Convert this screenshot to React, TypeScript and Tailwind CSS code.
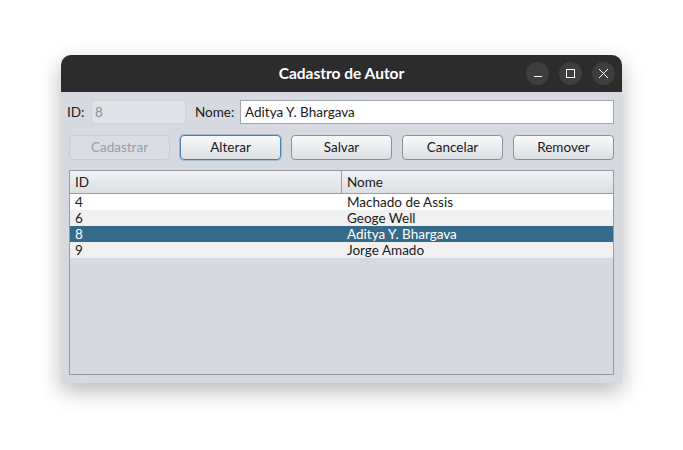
import { X } from 'lucide-react';

const rows = [
  { id: '4', nome: 'Machado de Assis' },
  { id: '6', nome: 'Geoge Well' },
  { id: '8', nome: 'Aditya Y. Bhargava' },
  { id: '9', nome: 'Jorge Amado' },
];

const btn =
  'h-[25px] w-[101px] rounded-[4px] border text-[13.5px] bg-gradient-to-b from-[#f8f9fa] to-[#dcdfe4] border-[#8d9097] text-[#1a1a1a]';

function TitleButton({ children }: { children: React.ReactNode }) {
  return (
    <div className="flex h-[23px] w-[23px] items-center justify-center rounded-full bg-[#3e3e3e] text-white">
      {children}
    </div>
  );
}

export default function App() {
  return (
    <div
      className="h-[450px] w-[683px] bg-white pt-[55px] pl-[61px]"
      style={{ fontFamily: 'Lato, "Noto Sans", sans-serif' }}
    >
      <div className="w-[561px] h-[328px] rounded-t-[10px] overflow-hidden bg-[#d6d9e0] shadow-[0_8px_22px_rgba(0,0,0,0.28)] flex flex-col">
        {/* title bar */}
        <div className="relative h-[37px] bg-[#2c2c2c] flex items-center justify-center">
          <span className="text-[15.5px] font-bold text-white">Cadastro de Autor</span>
          <div className="absolute right-[7px] top-[7px] flex gap-[10px]">
            <TitleButton>
              <div className="mt-[6px] h-[1.5px] w-[8px] bg-white" />
            </TitleButton>
            <TitleButton>
              <div className="h-[9px] w-[9px] border-[1.5px] border-white" />
            </TitleButton>
            <TitleButton>
              <X className="h-[17px] w-[17px] shrink-0" strokeWidth={1.4} />
            </TitleButton>
          </div>
        </div>

        <div className="flex flex-col px-[8px] pt-[8px]">
          {/* fields */}
          <div className="flex items-center h-[24px] text-[13.5px] text-[#1a1a1a]">
            <span className="ml-[-2px] w-[24px]">ID:</span>
            <div className="h-[24px] w-[95px] border border-[#cfd2d8] bg-[#dfe2e7] pl-[3px] flex items-center text-[#8d9096]">
              8
            </div>
            <span className="ml-[9px] w-[45px]">Nome:</span>
            <div className="h-[24px] flex-1 border border-[#a3a6ac] bg-white pl-[4px] flex items-center">
              Aditya Y. Bhargava
            </div>
          </div>

          {/* buttons */}
          <div className="mt-[11px] flex gap-[10px]">
            <button className="h-[25px] w-[101px] rounded-[4px] border border-[#c8cbd1] bg-[#d9dce2] text-[13.5px] text-[#999ca2]">
              Cadastrar
            </button>
            <button className={btn + ' !border-[#4a7fb0] shadow-[0_0_0_1px_rgba(74,127,176,0.35)]'}>Alterar</button>
            <button className={btn}>Salvar</button>
            <button className={btn}>Cancelar</button>
            <button className={btn}>Remover</button>
          </div>

          {/* table */}
          <div className="mt-[10px] h-[205px] border border-[#989ba3] text-[13.5px] text-[#1a1a1a]">
            <div className="flex h-[23px] border-b border-[#989ba3] bg-gradient-to-b from-[#f1f2f4] to-[#dcdee3]">
              <div className="w-[272px] border-r border-[#989ba3] pl-[5px] flex items-center">ID</div>
              <div className="flex-1 pl-[5px] flex items-center">Nome</div>
            </div>
            {rows.map((r, i) => {
              const sel = r.id === '8';
              const bg = sel ? 'bg-[#366a8a] text-white' : i % 2 === 0 ? 'bg-white' : 'bg-[#f0f0f0]';
              return (
                <div key={r.id} className={'flex h-[16px] items-center pt-[2px] leading-none ' + bg}>
                  <div className="w-[272px] pl-[5px]">{r.id}</div>
                  <div className="flex-1 pl-[5px]">{r.nome}</div>
                </div>
              );
            })}
          </div>
        </div>
      </div>
    </div>
  );
}
